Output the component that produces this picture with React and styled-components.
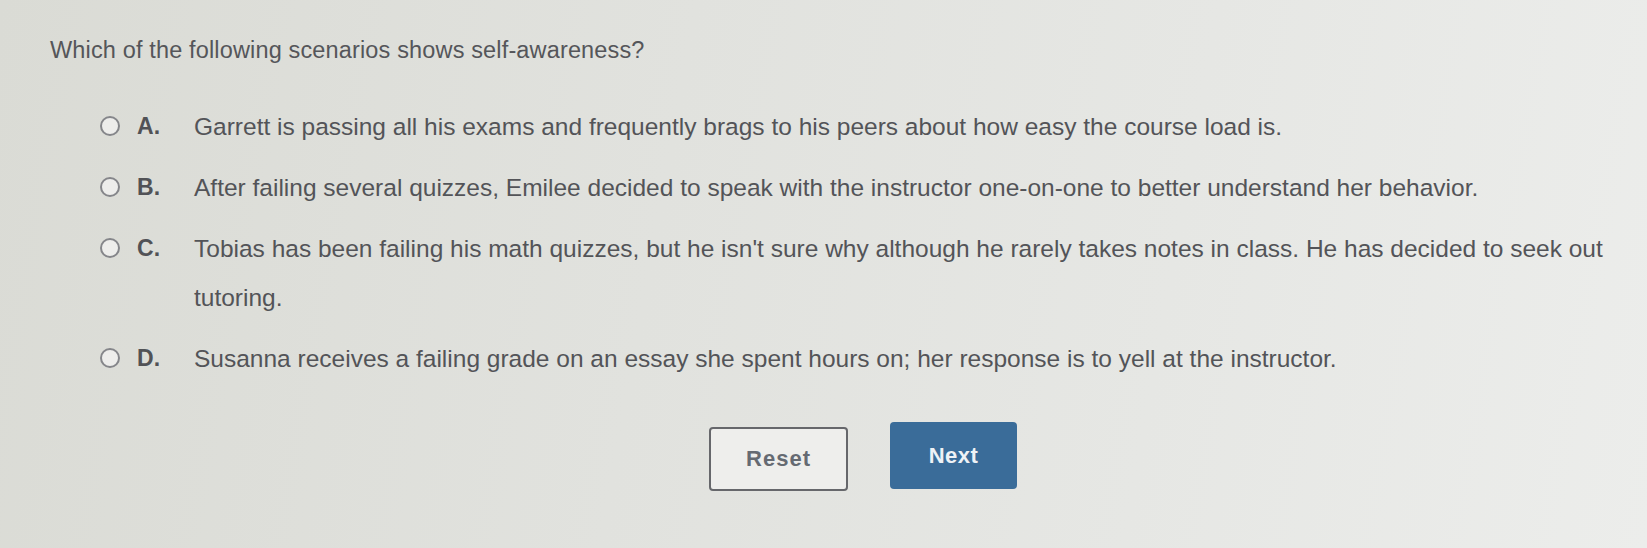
import React, { useState } from "react";
import styled, { createGlobalStyle } from "styled-components";

const GlobalStyle = createGlobalStyle`
  html, body {
    margin: 0;
    padding: 0;
  }
  body {
    font-family: "Liberation Sans", Arial, sans-serif;
    background: #e0e1dc;
  }
`;

const options = [
  {
    key: "A",
    text: "Garrett is passing all his exams and frequently brags to his peers about how easy the course load is.",
  },
  {
    key: "B",
    text: "After failing several quizzes, Emilee decided to speak with the instructor one-on-one to better understand her behavior.",
  },
  {
    key: "C",
    text: "Tobias has been failing his math quizzes, but he isn't sure why although he rarely takes notes in class. He has decided to seek out tutoring.",
  },
  {
    key: "D",
    text: "Susanna receives a failing grade on an essay she spent hours on; her response is to yell at the instructor.",
  },
];

function App() {
  const [selected, setSelected] = useState(null);
  return (
    <Page>
      <GlobalStyle />
      <Question>Which of the following scenarios shows self-awareness?</Question>
      <OptionList>
        {options.map((o) => (
          <Option key={o.key} onClick={() => setSelected(o.key)}>
            <Radio checked={selected === o.key} />
            <Letter>{o.key}.</Letter>
            <OptionText>{o.text}</OptionText>
          </Option>
        ))}
      </OptionList>
      <Actions>
        <ResetButton onClick={() => setSelected(null)}>Reset</ResetButton>
        <NextButton>Next</NextButton>
      </Actions>
    </Page>
  );
}
export default App;

const Page = styled.div`
  width: 1647px;
  height: 548px;
  box-sizing: border-box;
  padding: 35px 0 0 50px;
  background: linear-gradient(
    100deg,
    #dadbd5 0%,
    #e1e2de 40%,
    #e6e7e4 70%,
    #ecedeb 100%
  );
  color: #535458;
  overflow: hidden;
`;

const Question = styled.div`
  font-size: 23.5px;
  line-height: 30px;
  letter-spacing: 0.15px;
  color: #55565a;
`;

const OptionList = styled.div`
  display: flex;
  flex-direction: column;
  gap: 12px;
  margin-top: 37px;
  padding-left: 50px;
`;

const Option = styled.div`
  display: flex;
  align-items: flex-start;
  cursor: pointer;
`;

const Radio = styled.span`
  flex: none;
  width: 20px;
  height: 20px;
  box-sizing: border-box;
  margin-top: 14px;
  border: 2px solid #85868a;
  border-radius: 50%;
  background: ${(p) => (p.checked ? "#3a6e9c" : "#ededeb")};
  box-shadow: ${(p) => (p.checked ? "inset 0 0 0 3px #ededeb" : "none")};
`;

const Letter = styled.span`
  flex: none;
  width: 57px;
  margin-left: 17px;
  font-size: 23px;
  line-height: 49px;
  font-weight: bold;
  color: #515256;
`;

const OptionText = styled.span`
  width: 1430px;
  font-size: 24.5px;
  line-height: 49px;
  color: #535458;
`;

const Actions = styled.div`
  display: flex;
  align-items: flex-start;
  gap: 42px;
  margin-top: 39px;
  padding-left: 659px;
`;

const ResetButton = styled.button`
  width: 139px;
  height: 64px;
  margin-top: 5px;
  box-sizing: border-box;
  border: 2px solid #66676b;
  border-radius: 4px;
  background: #eeeeec;
  font-family: "Liberation Sans", Arial, sans-serif;
  font-size: 22px;
  font-weight: bold;
  color: #656a72;
  letter-spacing: 1px;
  cursor: pointer;
`;

const NextButton = styled.button`
  width: 127px;
  height: 67px;
  box-sizing: border-box;
  border: none;
  border-radius: 4px;
  background: #3a6c99;
  font-family: "Liberation Sans", Arial, sans-serif;
  font-size: 22px;
  font-weight: bold;
  color: #eef2f6;
  letter-spacing: 0.5px;
  cursor: pointer;
`;
